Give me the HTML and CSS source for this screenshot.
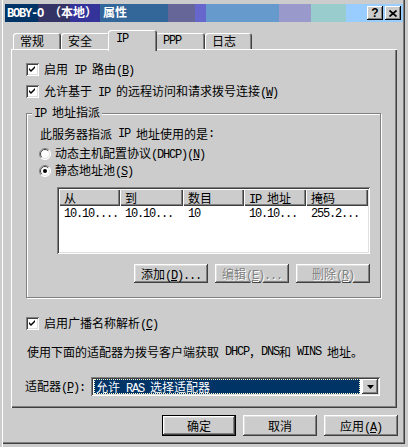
FILE: index.html
```html
<!DOCTYPE html>
<html lang="zh-CN">
<head>
  <meta charset="UTF-8">
  <title>BOBY-O (本地) 属性</title>
  <link rel="stylesheet" href="styles.css">
</head>
<body>
  <div class="window">
    <div class="titlebar">
      <span class="title"><span class="en">BOBY-O </span>（本地）<span class="en"> </span>属性</span>
      <div class="title-buttons">
        <button class="tbtn">?</button>
        <button class="tbtn">
          <svg width="8" height="7" viewBox="0 0 8 7"><path d="M0.5 0.5 L7.5 6.5 M7.5 0.5 L0.5 6.5" stroke="#000" stroke-width="1.7"/></svg>
        </button>
      </div>
    </div>

    <div class="tabs">
      <div class="tab t1">常规</div>
      <div class="tab t2">安全</div>
      <div class="tab t3 active"><span class="en">IP</span></div>
      <div class="tab t4"><span class="en">PPP</span></div>
      <div class="tab t5">日志</div>
    </div>

    <div class="panel">
      <div class="row first">
        <span class="check"><svg width="9" height="9" viewBox="0 0 9 9"><polygon points="1,3 3,5 7,1 7,3 3,7 1,5" fill="#000"/></svg></span>
        <span>启用<span class="en"> IP </span>路由<span class="en">(<u>B</u>)</span></span>
      </div>
      <div class="row second">
        <span class="check"><svg width="9" height="9" viewBox="0 0 9 9"><polygon points="1,3 3,5 7,1 7,3 3,7 1,5" fill="#000"/></svg></span>
        <span>允许基于<span class="en"> IP </span>的远程访问和请求拨号连接<span class="en">(<u>W</u>)</span></span>
      </div>

      <fieldset class="group">
        <legend><span class="en">IP </span>地址指派</legend>
        <div class="group-body">
          <div class="line intro">此服务器指派<span class="en"> IP </span>地址使用的是<span class="en">:</span></div>
          <div class="line radio-row r1">
            <svg class="radio" width="12" height="12" viewBox="0 0 12 12">
              <circle cx="6" cy="6" r="5.5" fill="#fff"/>
              <path d="M2.1 9.9A5.5 5.5 0 0 1 9.9 2.1" stroke="#808080" fill="none"/>
              <path d="M9.9 2.1A5.5 5.5 0 0 1 2.1 9.9" stroke="#fff" fill="none"/>
              <path d="M2.8 9.2A4.5 4.5 0 0 1 9.2 2.8" stroke="#404040" fill="none"/>
              <path d="M9.2 2.8A4.5 4.5 0 0 1 2.8 9.2" stroke="#dfdfdf" fill="none"/>
            </svg>
            <span>动态主机配置协议<span class="en">(DHCP)(<u>N</u>)</span></span>
          </div>
          <div class="line radio-row r2">
            <svg class="radio" width="12" height="12" viewBox="0 0 12 12">
              <circle cx="6" cy="6" r="5.5" fill="#fff"/>
              <path d="M2.1 9.9A5.5 5.5 0 0 1 9.9 2.1" stroke="#808080" fill="none"/>
              <path d="M9.9 2.1A5.5 5.5 0 0 1 2.1 9.9" stroke="#fff" fill="none"/>
              <path d="M2.8 9.2A4.5 4.5 0 0 1 9.2 2.8" stroke="#404040" fill="none"/>
              <path d="M9.2 2.8A4.5 4.5 0 0 1 2.8 9.2" stroke="#dfdfdf" fill="none"/>
              <circle cx="6" cy="6" r="2" fill="#000"/>
            </svg>
            <span>静态地址池<span class="en">(<u>S</u>)</span></span>
          </div>

          <div class="listview">
            <div class="lv-head">从</div>
            <div class="lv-head">到</div>
            <div class="lv-head">数目</div>
            <div class="lv-head"><span class="en">IP </span>地址</div>
            <div class="lv-head">掩码</div>
            <div class="lv-cell">10.10....</div>
            <div class="lv-cell">10.10...</div>
            <div class="lv-cell">10</div>
            <div class="lv-cell">10.10...</div>
            <div class="lv-cell">255.2...</div>
          </div>

          <div class="list-buttons">
            <button class="btn small">添加<span class="en">(<u>D</u>)...</span></button>
            <button class="btn small" disabled>编辑<span class="en">(<u>E</u>)...</span></button>
            <button class="btn small" disabled>删除<span class="en">(<u>R</u>)</span></button>
          </div>
        </div>
      </fieldset>

      <div class="row third">
        <span class="check"><svg width="9" height="9" viewBox="0 0 9 9"><polygon points="1,3 3,5 7,1 7,3 3,7 1,5" fill="#000"/></svg></span>
        <span>启用广播名称解析<span class="en">(<u>C</u>)</span></span>
      </div>
      <div class="line note">使用下面的适配器为拨号客户端获取<span class="en"> DHCP</span>，<span class="en">DNS</span>和<span class="en"> WINS </span>地址。</div>

      <div class="adapter">
        <span class="adapter-label">适配器<span class="en">(<u>P</u>):</span></span>
        <div class="combo">
          <span class="combo-value">允许<span class="en"> RAS </span>选择适配器</span>
          <span class="combo-arrow">
            <svg width="7" height="4" viewBox="0 0 7 4"><polygon points="0,0 7,0 3.5,4" fill="#000"/></svg>
          </span>
        </div>
      </div>
    </div>

    <div class="actions">
      <button class="btn default">确定</button>
      <button class="btn">取消</button>
      <button class="btn">应用<span class="en">(<u>A</u>)</span></button>
    </div>
  </div>
</body>
</html>
```

FILE: styles.css
```css
* {
  box-sizing: border-box;
}

body {
  margin: 0;
  background-color: #cccccc;
  font-family: "Noto Sans CJK SC", sans-serif;
  font-size: 12px;
  line-height: 16px;
  color: #000;
}

/* latin runs: half-width cells like the system bitmap font */
.en {
  font-family: "Liberation Mono", "DejaVu Sans Mono", monospace;
  font-size: 12px;
  letter-spacing: -1.2px;
  white-space: pre;
}

.window {
  width: 408px;
  height: 447px;
  padding: 4px 5px 4px 5px;
  box-shadow:
    inset 2px 0 0 #cccccc,
    inset 3px 0 0 #ffffff,
    inset -3px -3px 0 #cccccc,
    inset -4px -4px 0 #404040,
    inset -5px -5px 0 #808080;
}

/* title bar */
.titlebar {
  height: 18px;
  display: flex;
  align-items: center;
  justify-content: space-between;
  padding: 0 2px;
  background: linear-gradient(to right,
    #003366 0, #003366 33px,
    #333366 33px, #333366 65px,
    #333399 65px, #333399 95px,
    #336699 95px, #336699 163px,
    #666699 163px, #666699 190px,
    #6666cc 190px, #6666cc 201px,
    #6699cc 201px, #6699cc 274px,
    #9999cc 274px, #9999cc 306px,
    #99cccc 306px, #99cccc 341px,
    #99ccff 341px, #99ccff 100%);
}

.title {
  color: #fff;
  font-weight: bold;
  font-size: 12px;
}

.title-buttons {
  display: flex;
  gap: 2px;
}

.tbtn {
  width: 16px;
  height: 14px;
  padding: 0;
  border: none;
  background-color: #cccccc;
  font-family: "Liberation Sans", sans-serif;
  font-weight: bold;
  font-size: 12px;
  line-height: 14px;
  display: flex;
  align-items: center;
  justify-content: center;
  box-shadow:
    inset -1px -1px 0 #000,
    inset 1px 1px 0 #fff,
    inset -2px -2px 0 #808080;
}

/* tabs */
.tabs {
  display: flex;
  align-items: flex-end;
  height: 19px;
  margin: 8px 0 0 6px;
  padding-left: 2px;
}

.tab {
  height: 16px;
  padding-left: 7px;
  display: flex;
  align-items: center;
  background-color: #cccccc;
  border-radius: 3px 3px 0 0;
  box-shadow:
    inset 1px 1px 0 #fff,
    inset -1px 0 0 #404040,
    inset -2px 0 0 #808080;
}

.t1 { width: 48px; }
.t2 { width: 49px; }
.t3 { width: 45px; }
.t4 { width: 50px; padding-left: 8px; }
.t5 { width: 47px; }

.tab.active {
  position: relative;
  z-index: 1;
  width: 49px;
  height: 21px;
  margin: 0 -2px -2px -2px;
  padding-left: 8px;
  padding-bottom: 3px;
}

/* property page */
.panel {
  width: 386px;
  height: 359px;
  margin-left: 6px;
  padding: 11px 16px 0 15px;
  box-shadow:
    inset 1px 1px 0 #fff,
    inset -1px -1px 0 #404040,
    inset -2px -2px 0 #808080;
}

.row {
  height: 19px;
  display: flex;
  align-items: center;
}

.row.second { margin-top: 3px; }
.row.third { margin-top: 16px; }

.check {
  width: 13px;
  height: 13px;
  margin-right: 5px;
  padding: 2px;
  background-color: #fff;
  box-shadow:
    inset 1px 1px 0 #808080,
    inset -1px -1px 0 #fff,
    inset 2px 2px 0 #404040,
    inset -2px -2px 0 #dfdfdf;
}

.check svg {
  display: block;
}

.group {
  margin: 4px 0 0 0;
  padding: 0;
  min-width: 0;
  border: 1px solid #808080;
  box-shadow: inset 1px 1px 0 #fff, 1px 1px 0 #fff;
}

.group legend {
  margin-left: 5px;
  padding: 0 2px;
  line-height: 14px;
  background-color: #cccccc;
}

.group-body {
  padding: 0 10px 14px 13px;
}

.line {
  height: 16px;
  display: flex;
  align-items: center;
}

.intro { margin-top: 5px; }
.r1 { margin-top: 4px; }
.r2 { margin-top: 1px; }

.radio-row {
  margin-left: -1px;
}

.radio {
  margin-right: 4px;
}

/* list view */
.listview {
  width: 313px;
  height: 67px;
  margin: 8px 0 0 17px;
  padding: 2px;
  background-color: #fff;
  display: grid;
  grid-template-columns: 61px 63px 61px 62px 62px;
  grid-template-rows: 17px 16px;
  align-content: start;
  box-shadow:
    inset 1px 1px 0 #808080,
    inset -1px -1px 0 #fff,
    inset 2px 2px 0 #404040,
    inset -2px -2px 0 #dfdfdf;
}

.lv-head {
  padding-left: 5px;
  line-height: 17px;
  background-color: #cccccc;
  box-shadow:
    inset 1px 1px 0 #fff,
    inset -1px -1px 0 #404040,
    inset -2px -2px 0 #808080;
}

.lv-cell {
  padding-left: 5px;
  line-height: 16px;
  font-family: "Liberation Mono", "DejaVu Sans Mono", monospace;
  font-size: 12px;
  letter-spacing: -1.2px;
  white-space: nowrap;
  overflow: hidden;
}

.list-buttons {
  width: 313px;
  margin: 10px 0 0 17px;
  display: flex;
  justify-content: flex-end;
  gap: 7px;
}

/* buttons */
.btn {
  width: 74px;
  height: 21px;
  padding: 0;
  border: none;
  background-color: #cccccc;
  font-family: inherit;
  font-size: 12px;
  color: #000;
  box-shadow:
    inset -1px -1px 0 #404040,
    inset 1px 1px 0 #fff,
    inset -2px -2px 0 #808080,
    inset 2px 2px 0 #dfdfdf;
}

.btn.small {
  height: 19px;
}

.btn:disabled {
  color: #808080;
  text-shadow: 1px 1px 0 #fff;
}

.btn.default {
  border: 1px solid #000;
}

.note {
  margin-top: 11px;
  margin-left: 1px;
}

/* adapter combo */
.adapter {
  margin-top: 17px;
  height: 19px;
  display: flex;
  align-items: center;
}

.adapter-label {
  width: 66px;
  margin-left: -1px;
}

.combo {
  width: 289px;
  height: 19px;
  padding: 2px 2px 2px 3px;
  background-color: #fff;
  display: flex;
  align-items: stretch;
  box-shadow:
    inset 1px 1px 0 #808080,
    inset -1px -1px 0 #fff,
    inset 2px 2px 0 #404040,
    inset -2px -2px 0 #dfdfdf;
}

.combo-value {
  flex: 1;
  margin-right: 2px;
  padding-left: 1px;
  background-color: #003366;
  color: #fff;
  border: 1px dotted #ffffcc;
  line-height: 13px;
}

.combo-arrow {
  width: 16px;
  display: flex;
  align-items: center;
  justify-content: center;
  background-color: #cccccc;
  box-shadow:
    inset -1px -1px 0 #404040,
    inset 1px 1px 0 #fff,
    inset -2px -2px 0 #808080;
}

.combo-arrow svg {
  display: block;
}

/* dialog buttons */
.actions {
  margin-top: 7px;
  padding-right: 5px;
  display: flex;
  justify-content: flex-end;
  gap: 7px;
}
```
